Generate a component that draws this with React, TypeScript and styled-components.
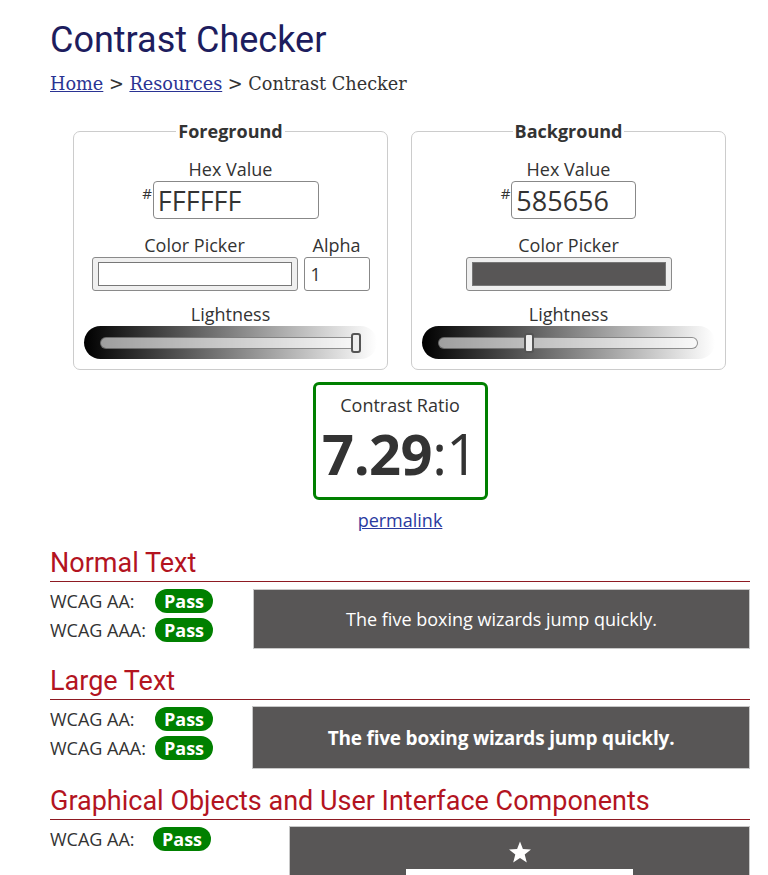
import React from "react";
import styled, { createGlobalStyle } from "styled-components";

const Global = createGlobalStyle`
  html, body { margin: 0; padding: 0; background: #fff; }
  body { font-family: "Open Sans", "Noto Sans", sans-serif; color: #333; font-size: 18px; }
  * { box-sizing: border-box; }
`;

const Page = styled.main`
  width: 700px;
  margin-left: 50px;
`;

const Title = styled.h1`
  margin: 19px 0 0;
  font-family: Roboto, sans-serif;
  font-weight: 400;
  font-size: 36px;
  line-height: 43px;
  color: #1d1d5e;
`;

const Crumbs = styled.nav`
  margin-top: 11px;
  font-family: "DejaVu Serif", serif;
  font-size: 17.7px;
  line-height: 23px;
  color: #333;
  a { color: #2a3393; text-decoration: underline; }
`;

const Pickers = styled.div`
  display: flex;
  gap: 23px;
  padding-left: 23px;
  margin-top: 24px;
`;

const Fieldset = styled.fieldset`
  width: 315px;
  margin: 0;
  padding: 14px 10px 10px;
  border: 1px solid #ccc;
  border-radius: 7px;
  display: flex;
  flex-direction: column;
  align-items: center;
`;

const Legend = styled.legend`
  margin: 0 auto;
  padding: 0 2px;
  font-weight: 700;
  font-size: 18px;
  line-height: 23px;
  color: #333;
`;

const Label = styled.label`
  display: block;
  font-size: 18px;
  line-height: 24px;
  color: #333;
  text-align: center;
`;

const HexRow = styled.div`
  display: flex;
  align-items: flex-start;
  gap: 1px;
`;

const Hash = styled.span`
  font-size: 15px;
  line-height: 15px;
  margin-top: 5px;
  color: #333;
`;

const HexInput = styled.input<{ $w: number }>`
  width: ${(p) => p.$w}px;
  height: 38px;
  border: 1px solid #888;
  border-radius: 4px;
  padding: 0 4px;
  font-family: "Open Sans", sans-serif;
  font-size: 27px;
  color: #333;
  outline: none;
`;

const PickRow = styled.div`
  display: flex;
  gap: 6px;
  margin-top: 14px;
`;

const PickCol = styled.div`
  display: flex;
  flex-direction: column;
  align-items: center;
`;

const Swatch = styled.button`
  width: 206px;
  height: 34px;
  padding: 4px 5px;
  border: 1px solid #8a8a8a;
  border-radius: 3px;
  background: #efefef;
  display: flex;
`;

const SwatchFill = styled.span<{ $c: string }>`
  flex: 1;
  border: 1px solid #777;
  background: ${(p) => p.$c};
`;

const AlphaInput = styled.input`
  width: 66px;
  height: 34px;
  border: 1px solid #888;
  border-radius: 3px;
  padding: 0 6px;
  font-family: "Open Sans", sans-serif;
  font-size: 18px;
  color: #333;
  outline: none;
`;

const LightBlock = styled.div`
  margin-top: 11px;
  width: 293px;
  display: flex;
  flex-direction: column;
  align-items: center;
`;

const Gradient = styled.div`
  width: 293px;
  height: 33px;
  border-radius: 17px;
  background: linear-gradient(to right, #000 0%, #fff 100%);
  padding: 0 17px 0 16px;
  display: flex;
  align-items: center;
`;

const Track = styled.div`
  position: relative;
  flex: 1;
  height: 12px;
  border-radius: 6px;
  background: rgba(255, 255, 255, 0.6);
  border: 1px solid rgba(60, 60, 60, 0.55);
`;

const Thumb = styled.span`
  position: absolute;
  top: -5px;
  width: 10px;
  height: 20px;
  margin-left: -5px;
  border: 2px solid #555;
  border-radius: 3px;
  background: #eee;
`;

const RatioBox = styled.div`
  width: 175px;
  height: 118px;
  margin: 12px auto 0;
  border: 3px solid #008000;
  border-radius: 6px;
  padding-top: 9px;
  display: flex;
  flex-direction: column;
  align-items: center;
`;

const RatioLabel = styled.div`
  font-size: 18px;
  line-height: 23px;
`;

const RatioValue = styled.div`
  margin-top: 5px;
  font-size: 56px;
  line-height: 62px;
  color: #333;
  letter-spacing: -0.5px;
  b { font-weight: 700; }
`;

const Permalink = styled.a`
  display: block;
  width: fit-content;
  margin: 9px auto 0;
  font-size: 18px;
  line-height: 23px;
  color: #2a3aa0;
`;

const Heading = styled.h2<{ $mt: number }>`
  margin: ${(p) => p.$mt}px 0 0;
  font-family: Roboto, sans-serif;
  font-weight: 400;
  font-size: 27px;
  line-height: 31px;
  color: #b3141f;
  padding-bottom: 2px;
  border-bottom: 1px solid #8e1a22;
`;

const Section = styled.div<{ $mt: number }>`
  display: flex;
  justify-content: space-between;
  align-items: flex-start;
  margin-top: ${(p) => p.$mt}px;
`;

const Results = styled.div<{ $pt: number }>`
  display: flex;
  flex-direction: column;
  gap: 5px;
  padding-top: ${(p) => p.$pt}px;
`;

const ResultRow = styled.div`
  display: flex;
  align-items: center;
`;

const ResultLabel = styled.span<{ $w: number }>`
  width: ${(p) => p.$w}px;
  font-size: 18px;
  line-height: 24px;
  color: #333;
`;

const Badge = styled.span`
  height: 24px;
  padding: 0 9px;
  border-radius: 12px;
  background: #008000;
  color: #fff;
  font-weight: 700;
  font-size: 18px;
  line-height: 24px;
`;

const Sample = styled.div<{ $w: number; $h: number; $bold?: boolean }>`
  width: ${(p) => p.$w}px;
  height: ${(p) => p.$h}px;
  background: #585656;
  border: 1px solid #c8c8c8;
  color: #fff;
  display: flex;
  align-items: center;
  justify-content: center;
  font-size: ${(p) => (p.$bold ? 19 : 18)}px;
  font-weight: ${(p) => (p.$bold ? 700 : 400)};
  letter-spacing: ${(p) => (p.$bold ? "-0.2px" : "0")};
`;

const GraphicSample = styled.div`
  width: 461px;
  height: 60px;
  background: #585656;
  border: 1px solid #c8c8c8;
  border-bottom: none;
  display: flex;
  flex-direction: column;
  align-items: center;
  padding-top: 14px;
`;

const Star = styled.svg`
  width: 24px;
  height: 23px;
  fill: #fff;
`;

const WhiteBar = styled.div`
  margin-top: 5px;
  width: 227px;
  flex: 1;
  background: #fff;
`;

function Slider({ pct }: { pct: number }) {
  return (
    <Gradient>
      <Track>
        <Thumb style={{ left: `${pct}%` }} />
      </Track>
    </Gradient>
  );
}

export default function App() {
  return (
    <>
      <Global />
      <Page>
        <Title>Contrast Checker</Title>
        <Crumbs>
          <a href="#">Home</a> &gt; <a href="#">Resources</a> &gt; Contrast Checker
        </Crumbs>

        <Pickers>
          <Fieldset>
            <Legend>Foreground</Legend>
            <Label>Hex Value</Label>
            <HexRow>
              <Hash>#</Hash>
              <HexInput $w={166} defaultValue="FFFFFF" />
            </HexRow>
            <PickRow>
              <PickCol>
                <Label>Color Picker</Label>
                <Swatch>
                  <SwatchFill $c="#ffffff" />
                </Swatch>
              </PickCol>
              <PickCol>
                <Label>Alpha</Label>
                <AlphaInput defaultValue="1" />
              </PickCol>
            </PickRow>
            <LightBlock>
              <Label>Lightness</Label>
              <Slider pct={99} />
            </LightBlock>
          </Fieldset>

          <Fieldset>
            <Legend>Background</Legend>
            <Label>Hex Value</Label>
            <HexRow>
              <Hash>#</Hash>
              <HexInput $w={125} defaultValue="585656" />
            </HexRow>
            <PickRow>
              <PickCol>
                <Label>Color Picker</Label>
                <Swatch>
                  <SwatchFill $c="#585656" />
                </Swatch>
              </PickCol>
            </PickRow>
            <LightBlock>
              <Label>Lightness</Label>
              <Slider pct={35} />
            </LightBlock>
          </Fieldset>
        </Pickers>

        <RatioBox>
          <RatioLabel>Contrast Ratio</RatioLabel>
          <RatioValue>
            <b>7.29</b>:1
          </RatioValue>
        </RatioBox>
        <Permalink href="#">permalink</Permalink>

        <Heading $mt={16}>Normal Text</Heading>
        <Section $mt={7}>
          <Results $pt={0}>
            <ResultRow>
              <ResultLabel $w={105}>WCAG AA:</ResultLabel>
              <Badge>Pass</Badge>
            </ResultRow>
            <ResultRow>
              <ResultLabel $w={105}>WCAG AAA:</ResultLabel>
              <Badge>Pass</Badge>
            </ResultRow>
          </Results>
          <Sample $w={497} $h={60}>The five boxing wizards jump quickly.</Sample>
        </Section>

        <Heading $mt={17}>Large Text</Heading>
        <Section $mt={6}>
          <Results $pt={1}>
            <ResultRow>
              <ResultLabel $w={105}>WCAG AA:</ResultLabel>
              <Badge>Pass</Badge>
            </ResultRow>
            <ResultRow>
              <ResultLabel $w={105}>WCAG AAA:</ResultLabel>
              <Badge>Pass</Badge>
            </ResultRow>
          </Results>
          <Sample $w={498} $h={63} $bold>
            The five boxing wizards jump quickly.
          </Sample>
        </Section>

        <Heading $mt={17}>Graphical Objects and User Interface Components</Heading>
        <Section $mt={6}>
          <Results $pt={1}>
            <ResultRow>
              <ResultLabel $w={103}>WCAG AA:</ResultLabel>
              <Badge>Pass</Badge>
            </ResultRow>
          </Results>
          <GraphicSample>
            <Star viewBox="0 0 24 23">
              <path d="M12 0.5l2.9 7.6 8.1 0.4-6.3 5.1 2.1 7.9L12 17l-6.8 4.5 2.1-7.9L1 8.5l8.1-0.4z" />
            </Star>
            <WhiteBar />
          </GraphicSample>
        </Section>
      </Page>
    </>
  );
}
